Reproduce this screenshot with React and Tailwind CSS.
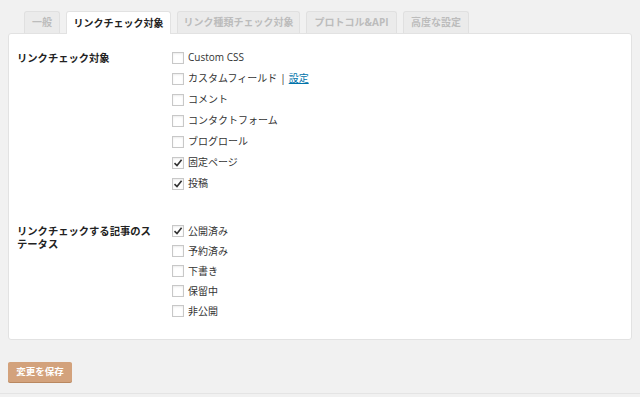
import React from "react";

const font = { fontFamily: '"Open Sans", "Noto Sans CJK JP", sans-serif' };

function Check({ checked }) {
  return (
    <span className="flex h-[12px] w-[12px] items-center justify-center border border-[#c8c8c8] bg-white shadow-[inset_0_1px_2px_rgba(0,0,0,0.08)]">
      {checked && (
        <svg width="10" height="10" viewBox="0 0 10 10">
          <path d="M1.5 5.2 L4 7.6 L8.6 1.8" fill="none" stroke="#333" strokeWidth="1.6" />
        </svg>
      )}
    </span>
  );
}

function Row({ label, checked, h, link }) {
  return (
    <div className={`flex items-center gap-[4px] ${h}`}>
      <Check checked={checked} />
      <span className="text-[10px] text-[#333]">
        {label}
        {link && (
          <>
            <span className="mx-[3px]">|</span>
            <span className="text-[#0073aa] underline">設定</span>
          </>
        )}
      </span>
    </div>
  );
}

const tabs = [
  { t: "一般", w: "w-[36px]" },
  { t: "リンクチェック対象", w: "w-[105px]", active: true },
  { t: "リンク種類チェック対象", w: "w-[123px]" },
  { t: "プロトコル&API", w: "w-[91px]" },
  { t: "高度な設定", w: "w-[66px]" },
];

export default function App() {
  return (
    <div className="h-[397px] w-[640px] overflow-hidden bg-[#f1f1f1]" style={font}>
      <div className="flex h-[33px] items-end gap-[6px] pl-[24px] pt-[11px]">
        {tabs.map((tb) =>
          tb.active ? (
            <div
              key={tb.t}
              className={`${tb.w} relative z-10 -mb-px flex h-[23px] items-center justify-center rounded-t-[3px] border border-b-0 border-[#e2e2e2] bg-white text-[10px] font-bold text-[#222]`}
            >
              {tb.t}
            </div>
          ) : (
            <div
              key={tb.t}
              className={`${tb.w} flex h-[22px] items-center justify-center rounded-t-[3px] border border-b-0 border-[#e0e0e0] bg-[#ebebeb] text-[10px] font-bold text-[#bcbcbc]`}
            >
              {tb.t}
            </div>
          )
        )}
      </div>
      <div className="mx-[8px] h-[307px] rounded-[3px] border border-[#e2e2e2] bg-white px-[8px] pt-[13px]">
        <div className="flex">
          <div className="w-[155px] pt-[5px] text-[10.3px] font-bold leading-[13px] text-[#222]">
            リンクチェック対象
          </div>
          <div className="flex flex-col">
            <Row h="h-[21px]" label="Custom CSS" />
            <Row h="h-[21px]" label="カスタムフィールド" link />
            <Row h="h-[21px]" label="コメント" />
            <Row h="h-[21px]" label="コンタクトフォーム" />
            <Row h="h-[21px]" label="ブログロール" />
            <Row h="h-[21px]" label="固定ページ" checked />
            <Row h="h-[21px]" label="投稿" checked />
          </div>
        </div>
        <div className="mt-[27px] flex">
          <div className="w-[155px] pt-[4px] text-[10.3px] font-bold leading-[13px] text-[#222]">
            リンクチェックする記事のス
            <br />
            テータス
          </div>
          <div className="flex flex-col">
            <Row h="h-[20px]" label="公開済み" checked />
            <Row h="h-[20px]" label="予約済み" />
            <Row h="h-[20px]" label="下書き" />
            <Row h="h-[20px]" label="保留中" />
            <Row h="h-[20px]" label="非公開" />
          </div>
        </div>
      </div>
      <div className="ml-[8px] mt-[22px] flex h-[20px] w-[64px] items-center justify-center rounded-[2px] bg-[#d3a27c] text-[9.5px] font-bold text-white shadow-[0_1px_0_#b9875f]">
        変更を保存
      </div>
      <div className="mt-[11px] border-t border-[#e4e4e4]" />
    </div>
  );
}
